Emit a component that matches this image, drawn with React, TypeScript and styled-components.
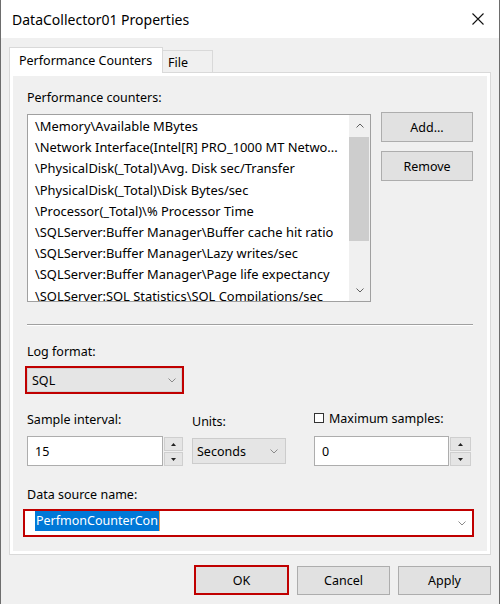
import styled, { createGlobalStyle } from "styled-components";

const GlobalStyle = createGlobalStyle`
  html, body {
    margin: 0;
    padding: 0;
    background: #f0f0f0;
  }
  * {
    box-sizing: border-box;
  }
  body {
    font-family: "Noto Sans", "Open Sans", sans-serif;
    font-size: 12.5px;
    color: #000;
  }
`;

const counters = [
  "\\Memory\\Available MBytes",
  "\\Network Interface(Intel[R] PRO_1000 MT Netwo...",
  "\\PhysicalDisk(_Total)\\Avg. Disk sec/Transfer",
  "\\PhysicalDisk(_Total)\\Disk Bytes/sec",
  "\\Processor(_Total)\\% Processor Time",
  "\\SQLServer:Buffer Manager\\Buffer cache hit ratio",
  "\\SQLServer:Buffer Manager\\Lazy writes/sec",
  "\\SQLServer:Buffer Manager\\Page life expectancy",
  "\\SQLServer:SQL Statistics\\SQL Compilations/sec",
];

const CloseIcon = () => (
  <svg width="12" height="12" viewBox="0 0 12 12">
    <path d="M0.5 0.5 L11.5 11.5 M11.5 0.5 L0.5 11.5" stroke="#111" strokeWidth="1.1" />
  </svg>
);

const Chevron = ({ up = false, color = "#8a8a8a" }: { up?: boolean; color?: string }) => (
  <svg width="8" height="5" viewBox="0 0 8 5">
    <path
      d={up ? "M0.5 4.5 L4 1 L7.5 4.5" : "M0.5 0.5 L4 4 L7.5 0.5"}
      stroke={color}
      strokeWidth="1"
      fill="none"
    />
  </svg>
);

const Triangle = ({ up = false }: { up?: boolean }) => (
  <svg width="5" height="3" viewBox="0 0 5 3">
    <polygon points={up ? "0,3 2.5,0 5,3" : "0,0 5,0 2.5,3"} fill="#222" />
  </svg>
);

export default function App(): JSX.Element {
  return (
    <>
      <GlobalStyle />
      <Window>
        <TitleBar>
          <span>DataCollector01 Properties</span>
          <CloseIcon />
        </TitleBar>
        <Body>
          <TabStrip>
            <Tab $active $width={154}>Performance Counters</Tab>
            <Tab $width={50}>File</Tab>
          </TabStrip>
          <Panel>
            <PanelInner>
              <Label>Performance counters:</Label>
              <ListRow>
                <ListBox>
                  <ListItems>
                    {counters.map((c) => (
                      <ListItem key={c}>{c}</ListItem>
                    ))}
                  </ListItems>
                  <ScrollBar>
                    <ScrollArrow>
                      <Chevron up color="#606060" />
                    </ScrollArrow>
                    <ScrollTrack>
                      <Thumb />
                    </ScrollTrack>
                    <ScrollArrow>
                      <Chevron color="#606060" />
                    </ScrollArrow>
                  </ScrollBar>
                </ListBox>
                <SideButtons>
                  <Button $w={92} $h={30}>Add...</Button>
                  <Button $w={92} $h={30}>Remove</Button>
                </SideButtons>
              </ListRow>

              <Separator />

              <Label $mt={16}>Log format:</Label>
              <RedFrame $w={159} $ml={-2}>
                <ComboBox $h={24}>
                  <span>SQL</span>
                  <Chevron />
                </ComboBox>
              </RedFrame>

              <FieldRow>
                <Field $w={156}>
                  <Label>Sample interval:</Label>
                  <SpinBox $mt={6}>
                    <TextBox>15</TextBox>
                    <Spinner $w={20}>
                      <SpinButton>
                        <Triangle up />
                      </SpinButton>
                      <SpinButton>
                        <Triangle />
                      </SpinButton>
                    </Spinner>
                  </SpinBox>
                </Field>
                <Field $w={94} $ml={9}>
                  <Label $mt={2}>Units:</Label>
                  <UnitsCombo $h={26}>
                    <span>Seconds</span>
                    <Chevron />
                  </UnitsCombo>
                </Field>
                <Field $w={157} $ml={28}>
                  <CheckRow>
                    <CheckBox />
                    <span>Maximum samples:</span>
                  </CheckRow>
                  <SpinBox $mt={8}>
                    <TextBox>0</TextBox>
                    <Spinner $w={22}>
                      <SpinButton>
                        <Triangle up />
                      </SpinButton>
                      <SpinButton>
                        <Triangle />
                      </SpinButton>
                    </Spinner>
                  </SpinBox>
                </Field>
              </FieldRow>

              <Label $mt={19}>Data source name:</Label>
              <RedFrame $w={451} $ml={-4}>
                <EditCombo>
                  <Selection>PerfmonCounterCon</Selection>
                  <EditChevron>
                    <Chevron />
                  </EditChevron>
                </EditCombo>
              </RedFrame>
            </PanelInner>
          </Panel>
          <Footer>
            <DialogButton $default>OK</DialogButton>
            <DialogButton>Cancel</DialogButton>
            <DialogButton>Apply</DialogButton>
          </Footer>
        </Body>
      </Window>
    </>
  );
}

const Window = styled.div`
  width: 500px;
  height: 604px;
  display: flex;
  flex-direction: column;
  background: #f0f0f0;
  border-left: 1px solid #6d6d6d;
  border-right: 1px solid #6d6d6d;
  overflow: hidden;
`;

const TitleBar = styled.div`
  height: 38px;
  flex-shrink: 0;
  background: #fff;
  display: flex;
  align-items: center;
  justify-content: space-between;
  padding: 0 15px 0 11px;
  font-size: 14px;
`;

const Body = styled.div`
  flex: 1;
  display: flex;
  flex-direction: column;
  padding: 9px 8px 0;
`;

const TabStrip = styled.div`
  display: flex;
  align-items: flex-end;
  height: 26px;
  margin-bottom: -1px;
  position: relative;
  z-index: 1;
`;

const Tab = styled.div<{ $active?: boolean; $width: number }>`
  width: ${(p) => p.$width}px;
  height: ${(p) => (p.$active ? 26 : 23)}px;
  display: flex;
  align-items: center;
  padding: ${(p) => (p.$active ? "0 0 0 9px" : "2px 0 0 5px")};
  background: ${(p) => (p.$active ? "#fff" : "#f0f0f0")};
  border: 1px solid #d9d9d9;
  border-bottom: ${(p) => (p.$active ? "none" : "1px solid #d9d9d9")};
  border-left: ${(p) => (p.$active ? "1px solid #d9d9d9" : "none")};
`;

const Panel = styled.div`
  width: 482px;
  height: 483px;
  border: 1px solid #d9d9d9;
  background: #fff;
  padding: 3px;
`;

const PanelInner = styled.div`
  height: 100%;
  background: #f0f0f0;
  display: flex;
  flex-direction: column;
  padding: 12px 0 0 14px;
`;

const Label = styled.div<{ $mt?: number }>`
  height: 20px;
  line-height: 20px;
  margin-top: ${(p) => p.$mt ?? 0}px;
  white-space: nowrap;
`;

const ListRow = styled.div`
  display: flex;
  align-items: flex-start;
  margin-top: 6px;
`;

const ListBox = styled.div`
  width: 344px;
  height: 188px;
  display: flex;
  background: #fff;
  border: 1px solid #a0a0a0;
`;

const ListItems = styled.div`
  flex: 1;
  overflow: hidden;
  padding: 1px 0 0 7px;
  font-size: 12.9px;
`;

const ListItem = styled.div`
  line-height: 21.2px;
  white-space: nowrap;
`;

const ScrollBar = styled.div`
  width: 21px;
  display: flex;
  flex-direction: column;
  background: #f0f0f0;
`;

const ScrollArrow = styled.div`
  height: 21px;
  display: flex;
  align-items: center;
  justify-content: center;
`;

const ScrollTrack = styled.div`
  flex: 1;
  padding: 1px 1px 0 0;
`;

const Thumb = styled.div`
  height: 104px;
  background: #cdcdcd;
`;

const SideButtons = styled.div`
  display: flex;
  flex-direction: column;
  gap: 9px;
  margin: -2px 0 0 10px;
`;

const Button = styled.button<{ $w: number; $h: number }>`
  width: ${(p) => p.$w}px;
  height: ${(p) => p.$h}px;
  padding: 0;
  font: inherit;
  color: #000;
  background: #e1e1e1;
  border: 1px solid #adadad;
`;

const Separator = styled.div`
  width: 446px;
  height: 2px;
  margin-top: 22px;
  border-top: 1px solid #a0a0a0;
  border-bottom: 1px solid #fff;
`;

const RedFrame = styled.div<{ $w: number; $ml: number }>`
  width: ${(p) => p.$w}px;
  margin: 4px 0 0 ${(p) => p.$ml}px;
  border: 2px solid #c00000;
`;

const ComboBox = styled.div<{ $h: number }>`
  height: ${(p) => p.$h}px;
  display: flex;
  align-items: center;
  justify-content: space-between;
  padding: 0 5px 0 4px;
  background: #e5e5e5;
  border: 1px solid #d2d2d2;
`;

const UnitsCombo = styled(ComboBox)`
  margin-top: 6px;
  border-color: #cccccc;
  padding-right: 7px;
`;

const FieldRow = styled.div`
  display: flex;
  margin-top: 16px;
`;

const Field = styled.div<{ $w: number; $ml?: number }>`
  width: ${(p) => p.$w}px;
  margin-left: ${(p) => p.$ml ?? 0}px;
  display: flex;
  flex-direction: column;
`;

const SpinBox = styled.div<{ $mt: number }>`
  height: 30px;
  margin-top: ${(p) => p.$mt}px;
  display: flex;
`;

const TextBox = styled.div`
  flex: 1;
  display: flex;
  align-items: center;
  padding-left: 7px;
  background: #fff;
  border: 1px solid #adadad;
`;

const Spinner = styled.div<{ $w: number }>`
  width: ${(p) => p.$w}px;
  display: flex;
  flex-direction: column;
  gap: 1px;
  padding: 1px 0 0 1px;
`;

const SpinButton = styled.div`
  flex: 1;
  display: flex;
  align-items: center;
  justify-content: center;
  background: #e5e5e5;
  border: 1px solid #cfcfcf;
`;

const CheckRow = styled.div`
  height: 20px;
  margin-top: -2px;
  display: flex;
  align-items: center;
  gap: 5px;
  white-space: nowrap;
`;

const CheckBox = styled.div`
  width: 10px;
  height: 10px;
  background: #fff;
  border: 1px solid #333;
`;

const EditCombo = styled.div`
  height: 24px;
  display: flex;
  align-items: flex-start;
  justify-content: space-between;
  padding: 0 6px 0 10px;
  background: #fff;
`;

const Selection = styled.span`
  line-height: 20px;
  padding: 0 1px;
  color: #fff;
  background: #0078d7;
  border-right: 1px solid #f39c4a;
`;

const EditChevron = styled.div`
  align-self: center;
  display: flex;
`;

const Footer = styled.div`
  display: flex;
  justify-content: flex-end;
  align-items: center;
  gap: 8px;
  height: 30px;
  margin-top: 10px;
`;

const DialogButton = styled.button<{ $default?: boolean }>`
  width: ${(p) => (p.$default ? 95 : 93)}px;
  height: ${(p) => (p.$default ? 30 : 29)}px;
  padding: 0;
  font: inherit;
  color: #000;
  background: #e1e1e1;
  border: ${(p) => (p.$default ? "2px solid #c00000" : "1px solid #adadad")};
`;
